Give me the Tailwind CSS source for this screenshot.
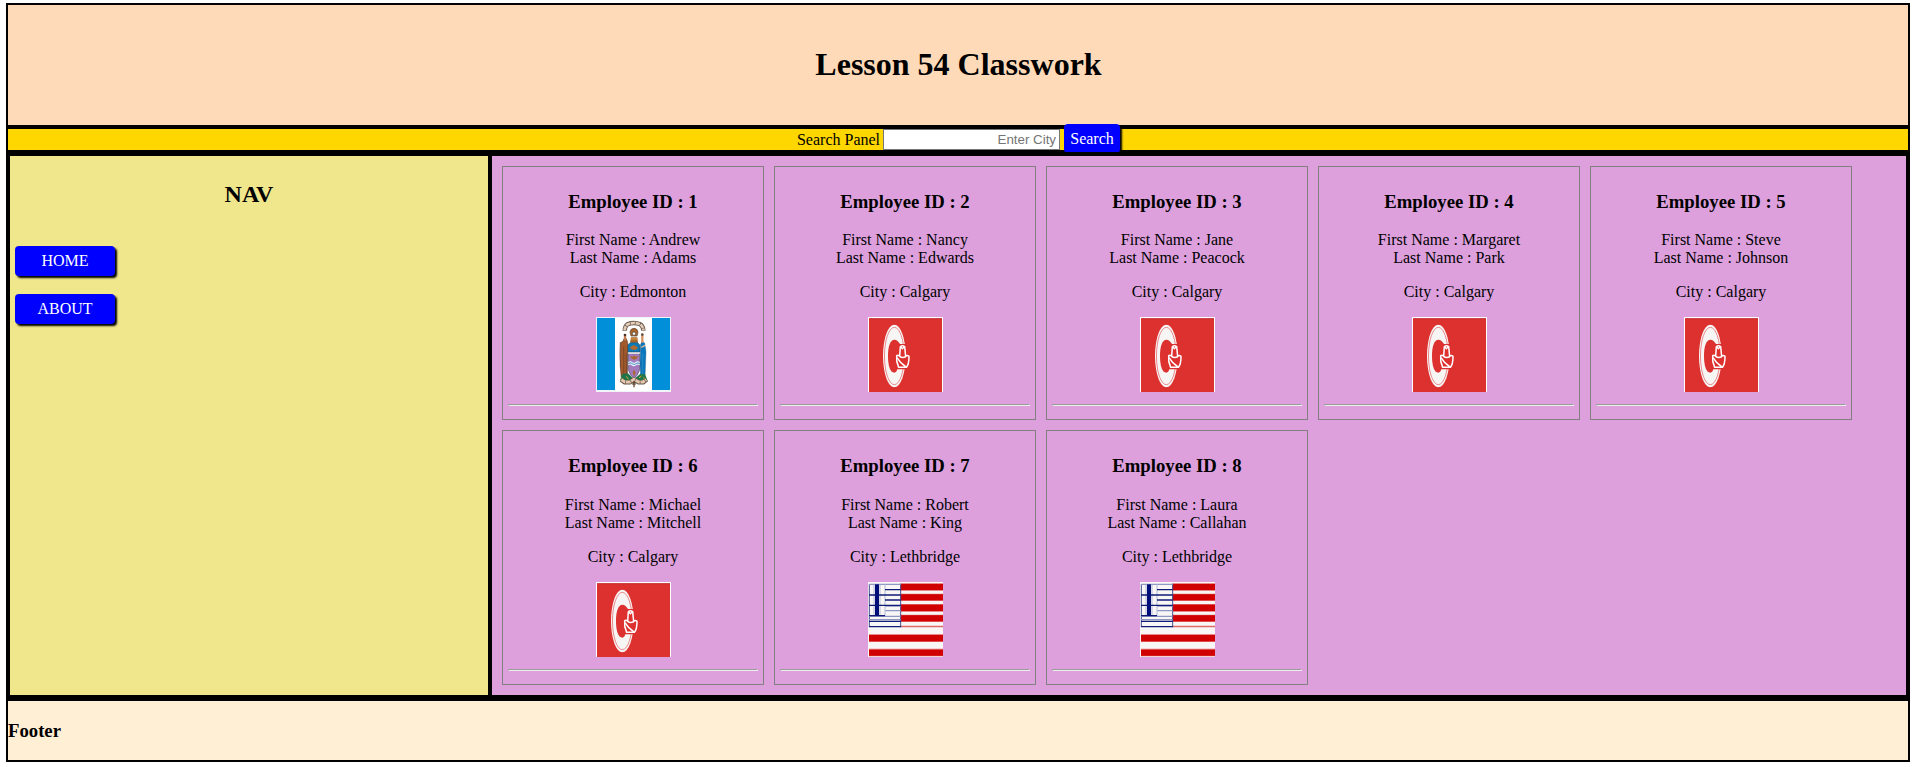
<!DOCTYPE html>
<html lang="en">
<head>
<meta charset="utf-8">
<title>Lesson 54 Classwork</title>
<script src="https://cdn.jsdelivr.net/npm/@tailwindcss/browser@4"></script>
</head>
<body class="bg-white text-black text-base leading-[18px] font-['Liberation_Serif','Times_New_Roman',serif]">
<svg class="hidden">
  <symbol id="edmonton" viewBox="18 21 225 225">
    <path fill="#f0f5fa" d="M18 21h225v225H18z"/>
    <path fill="#028fd9" d="M21 24h54v216H21zM186 24h54v216h-54z"/>
    <path fill="#fff" d="M75 24h111v219H75z"/>
    <path d="M104 62Q104 50 112 43Q132 35 151 43Q160 50 160 62" fill="none" stroke="#6b5a50" stroke-width="13"/>
    <path d="M104 61Q104 50 113 43Q132 35 151 43Q160 50 160 61" fill="none" stroke="#e3cdb8" stroke-width="8" stroke-dasharray="13 2"/>
    <path d="M120 66Q121 56 132 55Q143 56 144 66L141 78H123z" fill="#a8652a" stroke="#5b4433" stroke-width="2"/>
    <circle cx="132" cy="71" r="5" fill="#fff" stroke="#444" stroke-width="2"/>
    <path d="M123 82h19l2 16h-24z" fill="#a5672c"/><path d="M123 87h19" stroke="#e5a23a" stroke-width="3"/>
    <path d="M113 105l9-7h21l7 8v20h-37z" fill="#087bb8" stroke="#27475d" stroke-width="2"/>
    <path d="M119 112l13-7 13 8-8 6h-11z" fill="#b36a2d"/>
    <path d="M92 98l7-4 3-8h7l4 12-1 92-9 15-9-1-3-35z" fill="#a2592c" stroke="#5a3826" stroke-width="2"/>
    <path d="M91 96q-3 38 1 76M101 110v85M109 130v63" fill="none" stroke="#6d4024" stroke-width="2"/>
    <path d="M105 91V76" stroke="#c77c51" stroke-width="7"/><circle cx="105" cy="75" r="4" fill="#4e3327"/>
    <path d="M152 103l4-9 8 5 4 26-3 79h-13l-2-42z" fill="#0877bf" stroke="#21506b" stroke-width="1"/>
    <path d="M157 98V77" stroke="#d79264" stroke-width="7"/><circle cx="157" cy="74" r="4" fill="#654832"/>
    <path d="M154 112l11-6" stroke="#e0b896" stroke-width="4"/>
    <path d="M158 130v70" fill="none" stroke="#3d8fbd" stroke-width="2"/>
    <path d="M90 211l7-19 17-2 18 18 19-17 14 2 8 19-18 8h-45z" fill="#207449"/>
    <path d="M94 204l8 5M109 199l6 9M147 203l8-5M161 202l4 8" stroke="#d5a035" stroke-width="3"/>
    <path d="M115 131h34v48q-6 18-17 27q-12-10-17-27z" fill="#a27abd" stroke="#4c4762" stroke-width="2"/>
    <path d="M115 130h34" stroke="#eee" stroke-width="3"/>
    <path d="M120 138l8 2 4-4 5 4 9-2-6 8-8 3-7-3zM132 179l5 8-4 13-5-13z" fill="#a96830"/>
    <path d="M115 158q6-5 11 0t11 0t12 0M115 164q6-5 11 0t11 0t12 0" fill="none" stroke="#e9f6fc" stroke-width="4"/>
    <path d="M116 161q6-5 11 0t11 0t11 0" fill="none" stroke="#1594c9" stroke-width="2"/>
    <path d="M93 209l11 8 16 0 12-9 14 9h14l10-8" fill="none" stroke="#665449" stroke-width="13"/>
    <path d="M94 209l11 7 15 0 12-8 14 8h13l10-7" fill="none" stroke="#e4c8ad" stroke-width="9" stroke-dasharray="14 2"/>
    <path d="M132 214v18M127 222h10" stroke="#674832" stroke-width="4"/>
  </symbol>
  <symbol id="calgary" viewBox="24 21 225 225">
    <path fill="#fff" d="M24 21h225v225H24z"/>
    <path fill="#dc312f" d="M27 25h219v221H27z"/><path stroke="#b92d34" stroke-width="2" d="M27 26h219"/>
    <ellipse cx="103" cy="138" rx="34" ry="94" fill="#f8f5f5"/>
    <ellipse cx="103" cy="138" rx="29.500" ry="86" fill="none" stroke="#df5654" stroke-width="2"/>
    <path fill="#dc312f" d="M120 102Q112 89 103 89C91 89 84 108 84 138S91 188 103 188Q109 188 112 178H140V102z"/>
    <path d="M110 137Q108 155 116 172H139Q147 165 147 139Q141 134 137 140L134 110Q127 104 121 110L119 139Q114 133 110 137Z" fill="#dc312f" stroke="#fff" stroke-width="4.500" stroke-linejoin="round"/>
    <path d="M119 139Q127 146 137 140M111 143Q121 160 138 171M122 110L127 116L133 110" fill="none" stroke="#fff" stroke-width="4.500"/>
  </symbol>
  <symbol id="lethbridge" viewBox="24 21 225 225">
    <path fill="#f8f7f6" d="M24 21h225v225H24z"/>
    <path fill="#e26866" d="M122 25h127v22H122zM122 56h127v22H122zM122 87h127v23H122zM122 119h127v22H122zM122 152h127v5H122zM27 178h222v23H27zM27 221h222v23H27z"/>
    <path fill="#d00000" d="M122 27h127v18H122zM122 58h127v18H122zM122 89h127v19H122zM122 121h127v18H122zM27 180h222v19H27zM27 224h222v18H27z"/>
    <path d="M28 27V156M122 26V157" stroke="#454d91" stroke-width="3"/>
    <path d="M27 28H122M27 124H122M75 93H122M75 107H122M27 134H122" stroke="#8f96c2" stroke-width="4"/>
    <path d="M75 28V124M42 28V124M60 28V124" stroke="#b4b8d7" stroke-width="3"/>
    <path d="M27 60H75M75 44H122M75 60H122M75 75H122M27 91H122M27 122H75M27 139H122M27 155H122" stroke="#101c76" stroke-width="4"/>
    <path fill="#000e78" d="M45 28h12v95H45z"/>
  </symbol>
</svg>
<div class="ml-[6px] mt-[3px] w-[1904px]">
  <header class="h-[124px] border-2 border-black bg-[#ffdab9] flex items-center justify-center">
    <h1 class="mb-[2px] ml-px text-[32px] leading-[36px] font-bold">Lesson 54 Classwork</h1>
  </header>
  <div class="h-[25px] border-2 border-black bg-[#ffd700] flex items-center justify-center gap-1">
    <span class="-mr-px pl-px">Search Panel</span>
    <input class="w-[177px] h-[21px] border border-[#767676] bg-white pl-[2px] pr-[3px] text-right text-[13.333px] font-['Liberation_Sans',Arial,sans-serif] placeholder:text-[#757575]" placeholder="Enter City">
    <button class="relative mb-[2px] h-[29px] w-[56px] shrink-0 rounded-[4px] bg-[#0000ff] text-white shadow-[2px_2px_2px_black]">Search</button>
  </div>
  <main class="relative h-[547px] border-2 border-black flex">
    <nav class="w-[482px] border-2 border-black bg-[#f0e68c] p-[5px]">
      <h2 class="mt-[20px] text-center text-2xl leading-[27px] font-bold">NAV</h2>
      <div class="mt-[38px] flex flex-col gap-[18px]">
        <a class="flex h-[30px] w-[100px] items-center justify-center rounded-[4px] bg-[#0000ff] text-white shadow-[2px_2px_2px_black]">HOME</a>
        <a class="flex h-[30px] w-[100px] items-center justify-center rounded-[4px] bg-[#0000ff] text-white shadow-[2px_2px_2px_black]">ABOUT</a>
      </div>
    </nav>
    <section id="cards" class="flex-1 border-2 border-black bg-[#dda0dd] p-[10px] flex flex-wrap content-start gap-[10px]"></section>
  </main>
  <footer class="h-[63px] border-2 border-black bg-[#ffefd5]">
    <h3 class="mt-[18.7px] text-[18.72px] leading-[22px] font-bold">Footer</h3>
  </footer>
</div>
<script>
const people = [
  ["Andrew","Adams","Edmonton"],["Nancy","Edwards","Calgary"],["Jane","Peacock","Calgary"],
  ["Margaret","Park","Calgary"],["Steve","Johnson","Calgary"],["Michael","Mitchell","Calgary"],
  ["Robert","King","Lethbridge"],["Laura","Callahan","Lethbridge"]
];
document.getElementById("cards").innerHTML = people.map(([first, last, city], i) => `
  <article class="w-[262px] h-[254.44px] border border-[#808080] p-[5px] flex flex-col items-center text-center">
    <h3 class="mt-[18.72px] mb-[18.72px] text-[18.72px] leading-[22px] font-bold">Employee ID : ${i + 1}</h3>
    <p>First Name : ${first}<br>Last Name : ${last}</p>
    <p class="my-4">City : ${city}</p>
    <svg class="size-[75px] shrink-0"><use href="#${city.toLowerCase()}"/></svg>
    <hr class="mt-[12px] h-[2px] w-full border border-t-[#9a9a9a] border-l-[#9a9a9a] border-r-[#eeeeee] border-b-[#eeeeee]">
  </article>`).join("");
</script>
</body>
</html>
